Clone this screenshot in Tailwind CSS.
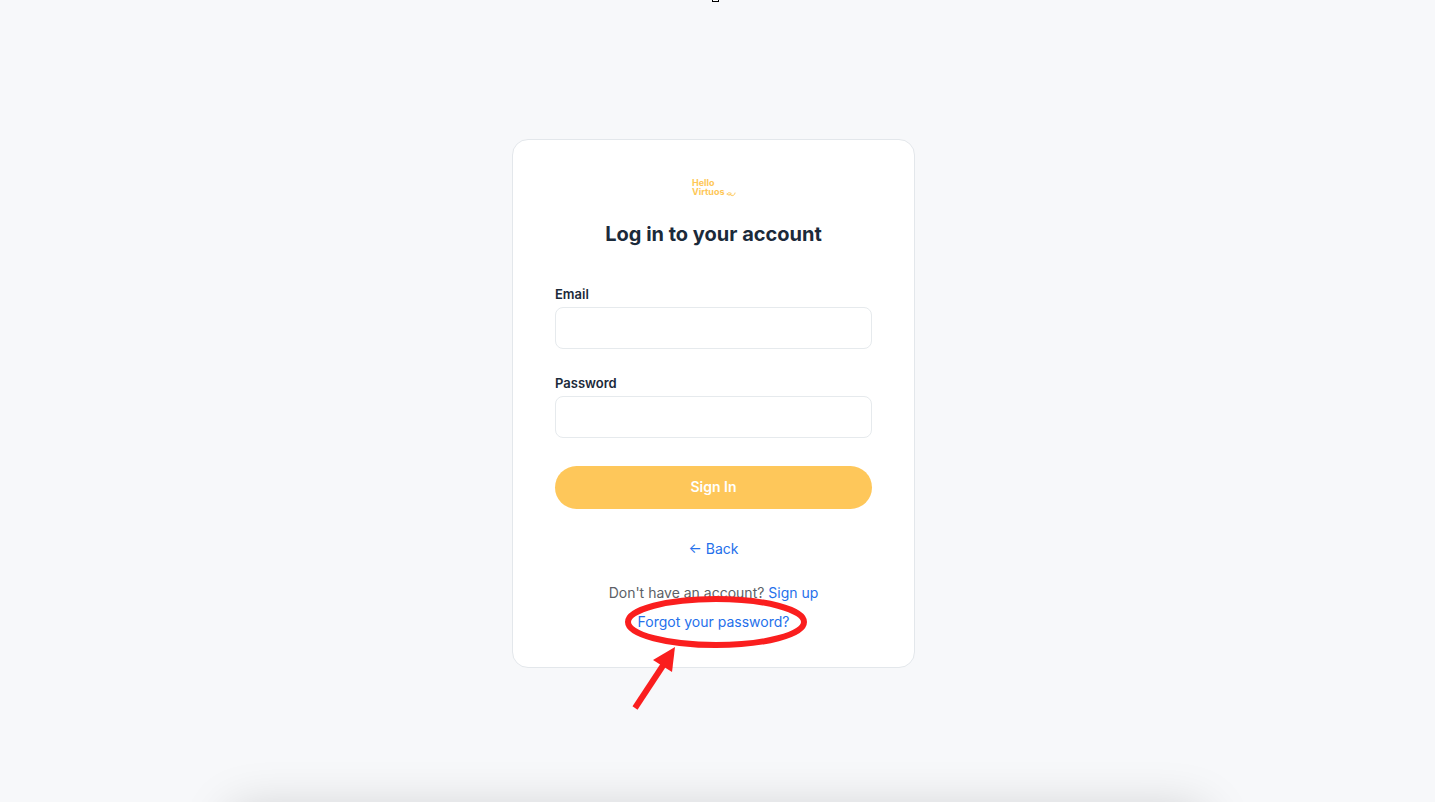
<!DOCTYPE html>
<html lang="en">
  <head>
    <meta charset="UTF-8" />
    <meta name="viewport" content="width=device-width, initial-scale=1.0" />
    <title>Log in to your account</title>
    <script src="https://cdn.jsdelivr.net/npm/@tailwindcss/browser@4"></script>
  </head>
  <body class="bg-[#f7f8fa] font-['Inter',sans-serif] text-sm text-[#1b2a3a]">
    <div class="relative flex min-h-screen items-center justify-center overflow-hidden pt-1 pr-2">
      <!-- caret -->
      <div class="absolute inset-x-0 top-0 flex justify-center pr-1">
        <div class="h-[2px] w-[7px] border-x border-b border-black bg-white"></div>
      </div>

      <main class="w-full max-w-[403px] rounded-2xl border border-[#e3e7eb] bg-white px-[42px] pt-[38px] pb-[31px]">
        <svg class="mx-auto block h-5 w-11 overflow-visible" viewBox="0 0 44 20" fill="#fec757" role="img" aria-label="Hello Virtuoso">
          <text x="0" y="8" font-family="Inter, sans-serif" font-weight="700" font-size="9">Hello</text>
          <text x="0" y="17" font-family="Inter, sans-serif" font-weight="700" font-size="9">Virtuos</text>
          <path d="M35 16c1.500-2 3.500-1.500 4.500 0M43 15c-.5 3-3.500 3.500-5 1.500M35 16c1 1.500 3 1.500 4 0" fill="none" stroke="#fec757" stroke-width="1" stroke-linecap="round" />
        </svg>
        <h1 class="mt-5 text-center text-xl leading-[33px] font-bold">Log in to your account</h1>

        <form class="mt-[33px]">
          <label for="email" class="block text-[13px] leading-5 font-semibold">Email</label>
          <input type="email" id="email" class="mt-[3px] block h-[42px] w-full rounded-lg border border-[#e6eaed] px-3 outline-none" />
          <label for="password" class="mt-6 block text-[13px] leading-5 font-semibold">Password</label>
          <input type="password" id="password" class="mt-[3px] block h-[42px] w-full rounded-lg border border-[#e6eaed] px-3 outline-none" />
          <button type="submit" class="mt-7 block h-[43px] w-full rounded-full bg-[#fec75a] text-sm font-semibold text-white">Sign In</button>
        </form>

        <div class="mt-[30px] text-center leading-5">
          <a href="#" class="text-[#2570eb]">← Back</a>
        </div>
        <div class="mt-[19px] text-center leading-[29px]">
          <p class="text-[#5c5f66]">Don't have an account? <a href="#" class="text-[#2570eb]">Sign up</a></p>
          <p class="relative">
            <a href="#" class="text-[#2570eb]">Forgot your password?</a>
            <!-- highlight ring and arrow -->
            <svg class="pointer-events-none absolute -top-3 left-1/2 h-[120px] w-[180px] -translate-x-1/2 overflow-visible" viewBox="0 0 180 120">
              <ellipse cx="92" cy="27" rx="88" ry="23" fill="none" stroke="#fa1e1e" stroke-width="6" />
              <path d="M11 113L40 69" fill="none" stroke="#fa1e1e" stroke-width="6" />
              <path d="M51 52L29 65L48 77Z" fill="#fa1e1e" />
            </svg>
          </p>
        </div>
      </main>

      <div class="absolute top-full right-[230px] left-[230px] h-24 rounded-xl shadow-[0_8px_50px_rgba(0,0,0,0.18)]"></div>
    </div>
  </body>
</html>
